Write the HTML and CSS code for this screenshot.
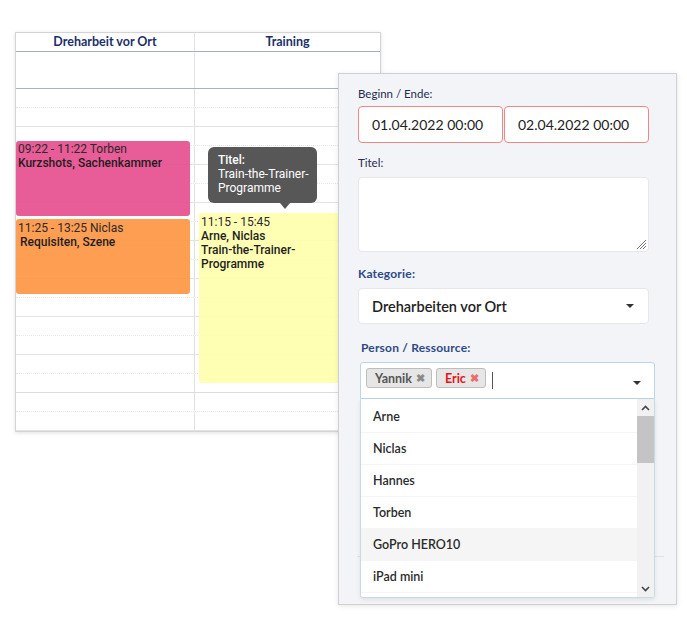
FILE: index.html
```html
<!DOCTYPE html>
<html lang="de">
<head>
  <meta charset="UTF-8" />
  <meta name="viewport" content="width=device-width, initial-scale=1.0"/>
  <title>Terminplanung</title>
  <link rel="stylesheet" href="styles.css">
</head>
<body>

<div class="scene">

  <!-- Kalender -->
  <div class="calendar">
    <div class="cal-head">
      <div class="cal-title">Dreharbeit vor Ort</div>
      <div class="cal-title">Training</div>
    </div>
    <div class="cal-allday"><div></div><div></div></div>
    <div class="cal-slots">
      <div class="slot dotted"><div></div><div></div></div>
      <div class="slot"><div></div><div></div></div>
      <div class="slot dotted"><div></div><div></div></div>
      <div class="slot"><div></div><div></div></div>
      <div class="slot dotted"><div></div><div></div></div>
      <div class="slot"><div></div><div></div></div>
      <div class="slot dotted"><div></div><div></div></div>
      <div class="slot"><div></div><div></div></div>
      <div class="slot dotted"><div></div><div></div></div>
      <div class="slot"><div></div><div></div></div>
      <div class="slot dotted"><div></div><div></div></div>
      <div class="slot"><div></div><div></div></div>
      <div class="slot dotted"><div></div><div></div></div>
      <div class="slot"><div></div><div></div></div>
      <div class="slot dotted"><div></div><div></div></div>
      <div class="slot hour"><div></div><div></div></div>
      <div class="slot dotted"><div></div><div></div></div>
      <div class="slot"><div></div><div></div></div>

      <div class="event event-pink">
        <div class="event-time">09:22 - 11:22 Torben</div>
        <div class="event-text">Kurzshots, Sachenkammer</div>
      </div>
      <div class="event event-orange">
        <div class="event-time">11:25 - 13:25 Niclas</div>
        <div class="event-text indent">Requisiten, Szene</div>
      </div>
      <div class="event event-yellow">
        <div class="event-time">11:15 - 15:45</div>
        <div class="event-text">Arne, Niclas</div>
        <div class="event-text">Train-the-Trainer-</div>
        <div class="event-text">Programme</div>
      </div>
    </div>
  </div>

  <div class="tooltip">
    <div class="tooltip-title">Titel:</div>
    <div>Train-the-Trainer-</div>
    <div>Programme</div>
  </div>

  <!-- Formular -->
  <div class="panel">
    <div class="field-label">Beginn / Ende:</div>
    <div class="date-row">
      <div class="date-input">01.04.2022 00:00</div>
      <div class="date-input">02.04.2022 00:00</div>
    </div>

    <div class="field-label spaced">Titel:</div>
    <div class="textarea">
      <svg class="grip" width="12" height="12" viewBox="0 0 12 12">
        <path d="M11 2 L2 11 M11 5 L5 11 M11 8 L8 11" stroke="#777" stroke-width="1" fill="none"/>
      </svg>
    </div>

    <div class="field-label accent spaced">Kategorie:</div>
    <div class="select">
      <span>Dreharbeiten vor Ort</span>
      <span class="caret"></span>
    </div>

    <div class="field-label accent person">Person / Ressource:</div>
    <div class="multi">
      <div class="multi-box">
        <span class="chip">Yannik <span class="chip-x">✖</span></span>
        <span class="chip chip-red">Eric <span class="chip-x">✖</span></span>
        <span class="cursor"></span>
        <span class="caret multi-caret"></span>
      </div>
      <div class="dropdown">
        <div class="dd-list">
          <div class="dd-item">Arne</div>
          <div class="dd-item">Niclas</div>
          <div class="dd-item">Hannes</div>
          <div class="dd-item">Torben</div>
          <div class="dd-item active">GoPro HERO10</div>
          <div class="dd-item">iPad mini</div>
        </div>
        <div class="dd-scroll">
          <div class="dd-arrow">
            <svg width="9" height="6" viewBox="0 0 9 6"><path d="M1 5 L4.5 1.5 L8 5" stroke="#444" stroke-width="1.6" fill="none"/></svg>
          </div>
          <div class="dd-thumb"></div>
          <div class="dd-track"></div>
          <div class="dd-arrow">
            <svg width="9" height="6" viewBox="0 0 9 6"><path d="M1 1 L4.5 4.5 L8 1" stroke="#444" stroke-width="1.6" fill="none"/></svg>
          </div>
        </div>
      </div>
    </div>

    <div class="panel-rule"></div>
  </div>

</div>

</body>
</html>
```

FILE: styles.css
```css
body {
  margin: 0;
  background-color: #fff;
  font-family: 'Lato', sans-serif;
  color: #333;
}

.scene {
  position: relative;
  width: 687px;
  height: 621px;
  overflow: hidden;
}

/* Kalender */

.calendar {
  margin: 32px 0 0 15px;
  width: 366px;
  box-sizing: border-box;
  border: 1px solid #d4d4d4;
  box-shadow: 0 1px 4px rgba(0,0,0,0.12);
  background-color: #fff;
}

.cal-head {
  display: grid;
  grid-template-columns: 179px 1fr;
  height: 18px;
  border-bottom: 1px solid #a3adc4;
}

.cal-title {
  font-family: 'Lato', sans-serif;
  font-weight: 700;
  font-size: 12.5px;
  line-height: 18px;
  text-align: center;
  color: #1b2f6b;
}

.cal-title:first-child {
  border-right: 1px solid #e2e2e2;
}

.cal-allday {
  display: grid;
  grid-template-columns: 179px 1fr;
  height: 36px;
  border-bottom: 1px solid #a8b1c7;
}

.cal-allday div:first-child {
  border-right: 1px solid #e2e2e2;
}

.cal-slots {
  position: relative;
}

.slot {
  display: grid;
  grid-template-columns: 179px 1fr;
  height: 19px;
  box-sizing: border-box;
  border-bottom: 1px solid #e3e3e3;
}

.slot.dotted {
  border-bottom: 1px dotted #e6e6e6;
}

.slot.hour {
  border-bottom-color: #dcdcdc;
}

.slot:last-child {
  height: 16px;
  border-bottom: none;
}

.slot div:first-child {
  border-right: 1px solid #e0e0e0;
}

.event {
  position: absolute;
  box-sizing: border-box;
  border-radius: 3px;
  padding: 1px 2px;
  font-family: 'Roboto', sans-serif;
  font-size: 12px;
  line-height: 14px;
  color: #2a2a2a;
}

.event-text {
  font-weight: 500;
  color: #1e1e1e;
}

.event-text.indent {
  padding-left: 2px;
}

.event-pink {
  left: 0;
  top: 52px;
  width: 174px;
  height: 75px;
  background-color: rgba(230, 80, 143, 0.93);
}

.event-orange {
  left: 0;
  top: 130px;
  width: 174px;
  height: 75px;
  padding-top: 2px;
  background-color: rgba(253, 150, 68, 0.92);
}

.event-yellow {
  left: 183px;
  top: 124px;
  width: 181px;
  height: 170px;
  padding-top: 2px;
  background-color: rgba(255, 255, 170, 0.88);
}

.tooltip {
  position: absolute;
  left: 208px;
  top: 147px;
  width: 109px;
  height: 56px;
  box-sizing: border-box;
  padding: 6px 0 0 10px;
  background-color: #575757;
  border-radius: 6px;
  color: #fff;
  font-family: 'Roboto', sans-serif;
  font-size: 12px;
  line-height: 14px;
}

.tooltip-title {
  font-weight: 500;
}

.tooltip::after {
  content: "";
  position: absolute;
  left: 72px;
  bottom: -6px;
  border-left: 5px solid transparent;
  border-right: 5px solid transparent;
  border-top: 6px solid #575757;
}

/* Formular */

.panel {
  position: absolute;
  left: 338px;
  top: 73px;
  width: 339px;
  height: 532px;
  box-sizing: border-box;
  padding: 13px 27px 0 19px;
  background-color: #f3f4f8;
  border: 1px solid #cfd0d5;
  box-shadow: 0 1px 5px rgba(0,0,0,0.1);
}

.field-label {
  font-size: 11.5px;
  line-height: 14px;
  color: #1f2b4f;
}

.field-label.spaced {
  margin-top: 13px;
}

.field-label.accent {
  font-size: 12px;
  font-weight: 700;
  color: #2e4a86;
  letter-spacing: 0.2px;
}

.field-label.accent.spaced {
  margin-top: 15px;
}

.field-label.person {
  margin-top: 17px;
  padding-left: 3px;
}

.date-row {
  display: flex;
  gap: 1px;
  margin-top: 5px;
}

.date-input {
  width: 145px;
  height: 37px;
  box-sizing: border-box;
  padding-left: 13px;
  display: flex;
  align-items: center;
  background-color: #fff;
  border: 1px solid #f18686;
  border-radius: 4px;
  font-size: 14px;
  color: #222;
}

.textarea {
  position: relative;
  height: 75px;
  margin-top: 7px;
  box-sizing: border-box;
  background-color: #fff;
  border: 1px solid #e6e7ec;
  border-radius: 4px;
}

.grip {
  position: absolute;
  right: 1px;
  bottom: 1px;
}

.select {
  height: 36px;
  margin-top: 7px;
  box-sizing: border-box;
  padding: 0 14px 0 13px;
  display: flex;
  align-items: center;
  justify-content: space-between;
  background-color: #fff;
  border: 1px solid #e6e7ec;
  border-radius: 4px;
  font-size: 14.5px;
  font-weight: 600;
  color: #222;
}

.caret {
  width: 0;
  height: 0;
  border-left: 4px solid transparent;
  border-right: 4px solid transparent;
  border-top: 4px solid #333;
}

.multi {
  position: relative;
  width: 295px;
  margin: 7px 0 0 2px;
}

.multi-box {
  height: 37px;
  box-sizing: border-box;
  padding: 5px 13px 0 5px;
  display: flex;
  align-items: flex-start;
  gap: 4px;
  background-color: #fff;
  border: 1px solid #bcd5e6;
  border-radius: 3px 3px 0 0;
}

.chip {
  height: 20px;
  box-sizing: border-box;
  padding: 0 6px 0 8px;
  display: flex;
  align-items: center;
  gap: 4px;
  background-color: #e6e6e6;
  border: 1px solid #bdbdbd;
  border-radius: 3px;
  font-size: 12.5px;
  font-weight: 700;
  color: #555;
}

.chip-x {
  font-size: 11px;
  color: #8a8a8a;
}

.chip-red {
  color: #e8141b;
}

.chip-red .chip-x {
  color: #f06a6a;
}

.cursor {
  width: 1px;
  height: 17px;
  margin: 4px 0 0 2px;
  background-color: #555;
}

.multi-caret {
  margin: 13px 0 0 auto;
}

.dropdown {
  position: absolute;
  left: 0;
  top: 37px;
  width: 295px;
  height: 199px;
  box-sizing: border-box;
  display: flex;
  background-color: #fff;
  border: 1px solid #c7dbe7;
  border-top: none;
  border-radius: 0 0 3px 3px;
  box-shadow: 0 2px 4px rgba(0,0,0,0.08);
}

.dd-list {
  flex: 1;
  padding-top: 2px;
}

.dd-item {
  height: 32px;
  box-sizing: border-box;
  padding-left: 12px;
  display: flex;
  align-items: center;
  border-bottom: 1px solid #f5f5f5;
  font-size: 12.5px;
  font-weight: 600;
  color: #2a2a2a;
}

.dd-item.active {
  background-color: #f5f5f5;
}

.dd-scroll {
  width: 17px;
  display: flex;
  flex-direction: column;
  background-color: #f1f1f1;
}

.dd-arrow {
  height: 17px;
  display: flex;
  align-items: center;
  justify-content: center;
}

.dd-thumb {
  height: 47px;
  background-color: #c4c4c4;
}

.dd-track {
  flex: 1;
}

.panel-rule {
  margin: 157px -15px 0 -1px;
  border-top: 1px solid #dfe1e6;
}
```
